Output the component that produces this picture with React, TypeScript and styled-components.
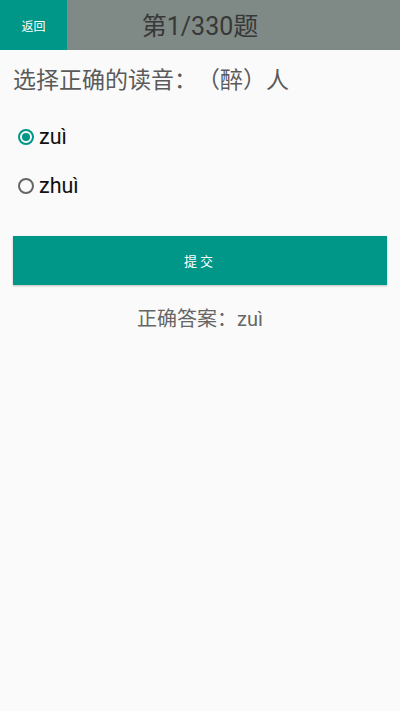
import React, { useState } from "react";
import styled, { createGlobalStyle } from "styled-components";

const GlobalStyle = createGlobalStyle`
  html, body { margin: 0; padding: 0; background: #fafafa; }
  body {
    font-family: Roboto, "Noto Sans CJK SC", sans-serif;
    text-spacing-trim: space-all;
  }
  * { box-sizing: border-box; }
`;

const Page = styled.div`
  width: 400px;
  height: 711px;
  background: #fafafa;
  display: flex;
  flex-direction: column;
`;

const Header = styled.div`
  height: 50px;
  display: flex;
  background: #7f8985;
`;

const BackButton = styled.button`
  width: 67px;
  height: 50px;
  border: none;
  background: #009688;
  color: #ffffff;
  font-family: Roboto, "Noto Sans CJK SC", sans-serif;
  font-size: 12px;
  padding: 0;
`;

const Title = styled.div`
  flex: 1;
  padding-right: 67px;
  padding-bottom: 3px;
  display: flex;
  align-items: center;
  justify-content: center;
  color: #383838;
  font-size: 25px;
`;

const Content = styled.div`
  display: flex;
  flex-direction: column;
  padding: 0 13px;
`;

const Question = styled.div`
  margin-top: 11px;
  height: 34px;
  display: flex;
  align-items: center;
  font-size: 23px;
  color: #5a5a5a;
  text-spacing-trim: space-all;
`;

const Options = styled.div`
  display: flex;
  flex-direction: column;
  margin-top: 17px;
`;

const OptionRow = styled.label`
  height: 49px;
  display: flex;
  align-items: center;
  gap: 5px;
  padding-left: 5px;
  font-size: 21.5px;
  color: #111111;
  cursor: pointer;
`;

const RadioCircle = styled.span<{ $checked: boolean }>`
  width: 16px;
  height: 16px;
  border-radius: 50%;
  border: 2px solid ${(p) => (p.$checked ? "#009688" : "#666666")};
  display: flex;
  align-items: center;
  justify-content: center;
  &::after {
    content: "";
    width: 8px;
    height: 8px;
    border-radius: 50%;
    background: ${(p) => (p.$checked ? "#009688" : "transparent")};
  }
`;

const SubmitButton = styled.button`
  margin-top: 26px;
  height: 49px;
  border: none;
  background: #009688;
  color: #ffffff;
  font-family: Roboto, "Noto Sans CJK SC", sans-serif;
  font-size: 13px;
  letter-spacing: 3px;
  box-shadow: 0 1px 2px rgba(0, 0, 0, 0.25);
`;

const Answer = styled.div`
  margin-top: 18px;
  text-align: center;
  font-size: 20px;
  color: #666666;
  text-spacing-trim: space-all;
`;

const options = ["zuì", "zhuì"];

export default function App() {
  const [selected, setSelected] = useState(0);
  return (
    <>
      <GlobalStyle />
      <Page>
        <Header>
          <BackButton>返回</BackButton>
          <Title>第1/330题</Title>
        </Header>
        <Content>
          <Question>选择正确的读音：（醉）人</Question>
          <Options>
            {options.map((o, i) => (
              <OptionRow key={o} onClick={() => setSelected(i)}>
                <RadioCircle $checked={selected === i} />
                {o}
              </OptionRow>
            ))}
          </Options>
          <SubmitButton>提交</SubmitButton>
          <Answer>正确答案：zuì</Answer>
        </Content>
      </Page>
    </>
  );
}
